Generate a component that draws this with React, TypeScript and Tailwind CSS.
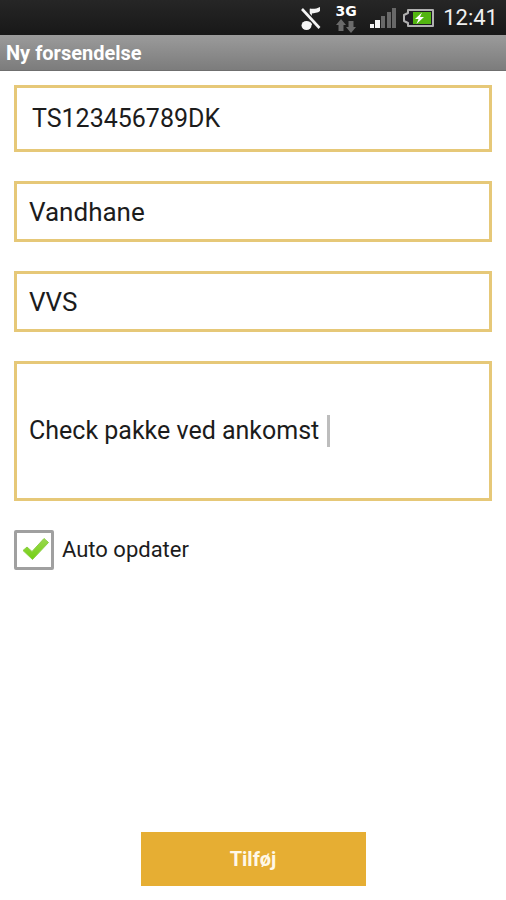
import { useState } from "react";

const fieldBox = "flex w-full items-center border-[3px] border-[#e6c878] bg-white cursor-text";
const fieldText = "bg-transparent leading-8 text-[#1c1c1c] outline-none";

function MutedIcon() {
  return (
    <svg width="22" height="26" viewBox="0 0 22 26" fill="none" aria-hidden="true">
      <ellipse cx="6.5" cy="20.5" rx="5" ry="4.600" fill="#f4f4f4" />
      <path d="M10.800 20V4" stroke="#f4f4f4" strokeWidth="2.200" />
      <path d="M9.800 3.500C13 4.300 16.500 3.800 20 2V6C18 8 14 8 11.500 8.500Z" fill="#f4f4f4" />
      <path d="M2 4L19.500 23" stroke="#202020" strokeWidth="5.500" />
      <path d="M2 4L19.500 23" stroke="#f4f4f4" strokeWidth="2.600" />
    </svg>
  );
}

function DataArrows() {
  return (
    <svg width="22" height="14" viewBox="0 0 22 14" fill="#6b6b6b" aria-hidden="true">
      <path d="M6 0L11 6H8.500V12H3.500V6H1Z" />
      <path d="M16 14L11 8H13.500V2H18.500V8H21Z" />
    </svg>
  );
}

function SignalIcon() {
  return (
    <svg width="28" height="22" viewBox="0 0 28 22" aria-hidden="true">
      <rect x="0" y="17" width="4" height="4" fill="#f4f4f4" />
      <rect x="5" y="13" width="5" height="8" fill="#f4f4f4" />
      <rect x="11" y="9" width="4" height="12" fill="#686868" />
      <rect x="17" y="5" width="4" height="16" fill="#686868" />
      <rect x="22" y="1" width="4" height="20" fill="#686868" />
    </svg>
  );
}

function BatteryIcon() {
  return (
    <svg width="33" height="20" viewBox="0 0 33 20" aria-hidden="true">
      <path d="M6 2H31V18H6V15L2 13V7L6 5Z" fill="#1d1b22" stroke="#b0b0b0" strokeWidth="2" strokeLinejoin="round" />
      <rect x="11" y="4" width="18" height="12" fill="#52b510" />
      <path d="M20 4.500L13 11H16.500L14.500 16L22 9H18Z" fill="#ffffff" />
    </svg>
  );
}

function StatusBar() {
  return (
    <div className="flex h-[35px] items-center justify-end bg-linear-to-b from-[#262626] to-[#181818] pr-2">
      <MutedIcon />
      <div className="ml-3 flex w-6 flex-col items-center">
        <span className="font-['DejaVu_Sans'] text-[14px] font-bold leading-4 text-white">3G</span>
        <DataArrows />
      </div>
      <div className="ml-3">
        <SignalIcon />
      </div>
      <div className="ml-1">
        <BatteryIcon />
      </div>
      <span className="ml-2 text-[22px] leading-8 text-[#f0f0f0]">12:41</span>
    </div>
  );
}

export default function App() {
  const [trackingNo, setTrackingNo] = useState("TS123456789DK");
  const [title, setTitle] = useState("Vandhane");
  const [sender, setSender] = useState("VVS");
  const [note, setNote] = useState("Check pakke ved ankomst");
  const [autoUpdate, setAutoUpdate] = useState(true);

  return (
    <div className="flex min-h-screen flex-col bg-white font-[Roboto,sans-serif]">
      <StatusBar />
      <header className="flex h-9 items-center border-b border-[#6f6f6f] bg-linear-to-b from-[#9b9b9b] to-[#7c7c7c] px-[6px]">
        <h1 className="text-[20px] font-bold leading-6 text-white">Ny forsendelse</h1>
      </header>

      <form
        className="flex flex-1 flex-col px-[14px] pb-[14px] pt-[14px]"
        onSubmit={(e) => e.preventDefault()}
      >
        <div className="flex flex-col gap-[29px]">
          <label className={`${fieldBox} h-[67px] px-[15px]`}>
            <input
              type="text"
              aria-label="Forsendelsesnummer"
              className={`${fieldText} w-full text-[25px]`}
              value={trackingNo}
              onChange={(e) => setTrackingNo(e.target.value)}
            />
          </label>
          <label className={`${fieldBox} h-[61px] px-3`}>
            <input
              type="text"
              aria-label="Titel"
              className={`${fieldText} w-full text-[26px]`}
              value={title}
              onChange={(e) => setTitle(e.target.value)}
            />
          </label>
          <label className={`${fieldBox} h-[61px] px-3`}>
            <input
              type="text"
              aria-label="Afsender"
              className={`${fieldText} w-full text-[26px]`}
              value={sender}
              onChange={(e) => setSender(e.target.value)}
            />
          </label>
          <label className={`${fieldBox} h-[140px] px-3`}>
            <input
              type="text"
              aria-label="Note"
              className={`${fieldText} max-w-full text-[25px] caret-transparent [field-sizing:content]`}
              value={note}
              onChange={(e) => setNote(e.target.value)}
            />
            <span className="ml-2 h-8 w-[3px] bg-[#bdbdbd]" />
          </label>

          {/* Auto opdater */}
          <div className="flex items-center gap-2">
            <div className="relative size-10">
              <input
                id="auto-update"
                type="checkbox"
                className="block size-10 appearance-none rounded-xs border-[3px] border-[#a0a0a0] bg-white"
                checked={autoUpdate}
                onChange={(e) => setAutoUpdate(e.target.checked)}
              />
              {autoUpdate && (
                <svg className="pointer-events-none absolute inset-0" width="40" height="40" viewBox="0 0 40 40" aria-hidden="true">
                  <defs>
                    <linearGradient id="tick" x1="0" y1="0" x2="0" y2="1">
                      <stop offset="0" stopColor="#9bd850" />
                      <stop offset="1" stopColor="#72d010" />
                    </linearGradient>
                  </defs>
                  <path d="M9 20.500L13 17L18 21.500L30 8.500L34.500 12.500L18.500 29.500Z" fill="url(#tick)" stroke="#8ccf45" strokeLinejoin="round" />
                </svg>
              )}
            </div>
            <label htmlFor="auto-update" className="text-[22px] leading-8 text-[#1c1c1c]">
              Auto opdater
            </label>
          </div>
        </div>

        <button
          type="submit"
          className="mt-auto h-[54px] w-[225px] self-center bg-[#e6ae33] text-[20px] font-bold leading-6 text-[#fff8e8]"
        >
          Tilføj
        </button>
      </form>
    </div>
  );
}
